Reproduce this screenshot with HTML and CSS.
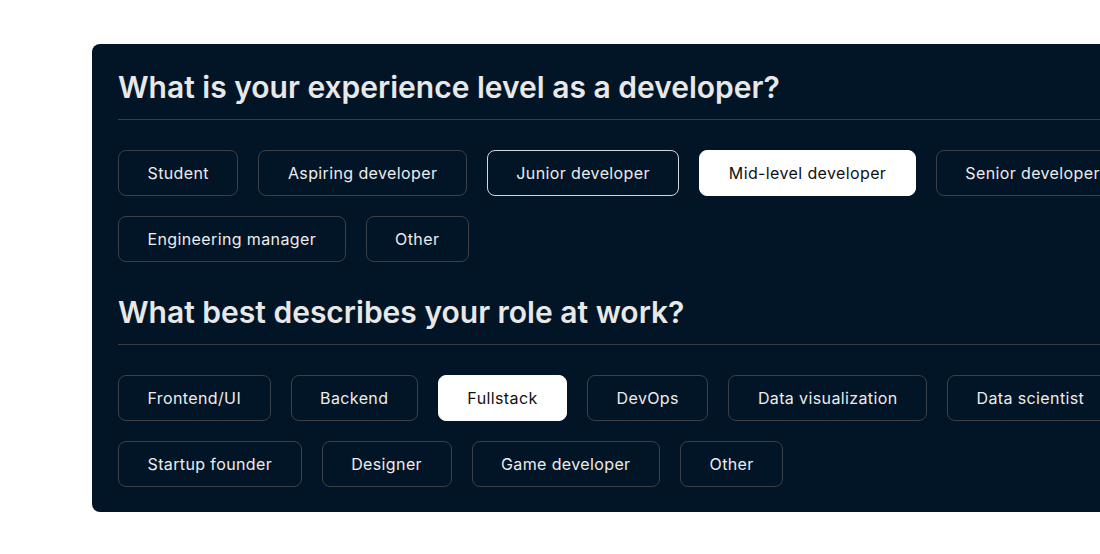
FILE: index.html
```html
<!DOCTYPE html>
<html lang="en">
<head>
    <meta charset="UTF-8">
    <meta name="viewport" content="width=device-width, initial-scale=1.0">
    <title>Developer survey</title>
    <link rel="stylesheet" href="styles.css">
</head>
<body>
    <div class="survey">
        <section class="question">
            <h2>What is your experience level as a developer?</h2>
            <div class="options">
                <button class="chip">Student</button>
                <button class="chip">Aspiring developer</button>
                <button class="chip focused">Junior developer</button>
                <button class="chip selected">Mid-level developer</button>
                <button class="chip">Senior developer</button>
                <button class="chip">Engineering manager</button>
                <button class="chip">Other</button>
            </div>
        </section>

        <section class="question">
            <h2>What best describes your role at work?</h2>
            <div class="options">
                <button class="chip">Frontend/UI</button>
                <button class="chip">Backend</button>
                <button class="chip selected">Fullstack</button>
                <button class="chip">DevOps</button>
                <button class="chip">Data visualization</button>
                <button class="chip">Data scientist</button>
                <button class="chip">Startup founder</button>
                <button class="chip">Designer</button>
                <button class="chip">Game developer</button>
                <button class="chip">Other</button>
            </div>
        </section>
    </div>
</body>
</html>
```

FILE: styles.css
```css
body {
    margin: 0;
    padding: 44px 0 0 92px;
    background-color: #fff;
    font-family: Inter, "Noto Sans", sans-serif;
    overflow: hidden;
}
.survey {
    width: 1114px;
    box-sizing: border-box;
    background-color: #021526;
    border-radius: 8px;
    padding: 23px 26px 25px;
}
.question h2 {
    margin: 0;
    color: #e8e8e8;
    font-size: 30px;
    font-weight: 600;
    line-height: 40px;
    padding-bottom: 12px;
    border-bottom: 1px solid #3a3d42;
}
.question + .question h2 {
    margin-top: 30px;
}
.options {
    display: flex;
    flex-wrap: wrap;
    gap: 20px;
    padding-top: 30px;
}
.chip {
    height: 46px;
    padding: 0 28.5px;
    background-color: transparent;
    border: 1px solid #3c3f44;
    border-radius: 8px;
    color: #ececec;
    font-family: inherit;
    font-size: 16px;
    letter-spacing: 0.38px;
    cursor: pointer;
}
.chip.focused {
    border-color: #d6d6d6;
}
.chip.selected {
    background-color: #fff;
    border-color: #fff;
    color: #111;
}
```
